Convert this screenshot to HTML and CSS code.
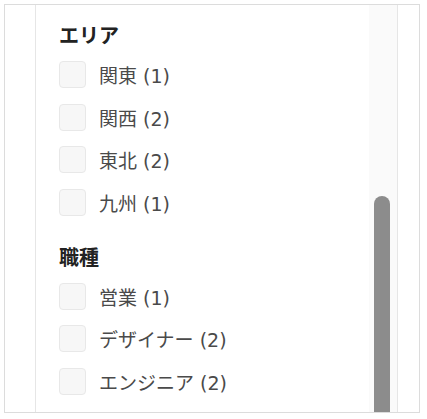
FILE: index.html
```html
<!DOCTYPE html>
<html lang="ja">
<head>
    <meta charset="UTF-8">
    <meta name="viewport" content="width=device-width, initial-scale=1.0">
    <title>絞り込み</title>
    <link rel="stylesheet" href="styles.css">
</head>
<body>
    <div class="frame">
        <div class="sidebar">
            <div class="filters">
                <div class="group">
                    <h3>エリア</h3>
                    <label class="option"><span class="box"></span>関東 (1)</label>
                    <label class="option"><span class="box"></span>関西 (2)</label>
                    <label class="option"><span class="box"></span>東北 (2)</label>
                    <label class="option"><span class="box"></span>九州 (1)</label>
                </div>
                <div class="group">
                    <h3>職種</h3>
                    <label class="option"><span class="box"></span>営業 (1)</label>
                    <label class="option"><span class="box"></span>デザイナー (2)</label>
                    <label class="option"><span class="box"></span>エンジニア (2)</label>
                </div>
            </div>
            <div class="scrollbar"><div class="thumb"></div></div>
        </div>
    </div>
</body>
</html>
```

FILE: styles.css
```css
body { margin: 0; background: #fff; font-family: "DejaVu Sans", "Noto Sans CJK JP", sans-serif; }
.frame {
    margin: 4px;
    width: 384px;
    height: 407px;
    border: 1px solid #dcdcdc;
    padding-left: 30px;
    overflow: hidden;
}
.sidebar {
    display: flex;
    width: 361px;
    height: 100%;
    border-left: 1px solid #e6e6e6;
    border-right: 1px solid #e6e6e6;
}
.filters { flex: 1; padding: 18px 0 0 23px; overflow: hidden; }
.group + .group { margin-top: 29px; }
.group h3 {
    margin: 0 0 14px;
    font-size: 20px;
    line-height: 24px;
    font-weight: bold;
    color: #222;
    font-family: "Noto Sans CJK JP", sans-serif;
}
.option {
    display: flex;
    align-items: center;
    gap: 13px;
    height: 27px;
    margin-bottom: 15.5px;
    font-size: 19px;
    color: #4a4a4a;
}
.box {
    width: 25px;
    height: 25px;
    background: #f7f7f7;
    border: 1px solid #e8e8e8;
    border-radius: 4px;
    flex-shrink: 0;
}
.scrollbar { width: 28px; background: #fafafa; flex-shrink: 0; }
.thumb {
    width: 16px;
    height: 400px;
    margin: 191px 0 0 5px;
    background: #8c8c8c;
    border-radius: 8px 8px 0 0;
}
```
